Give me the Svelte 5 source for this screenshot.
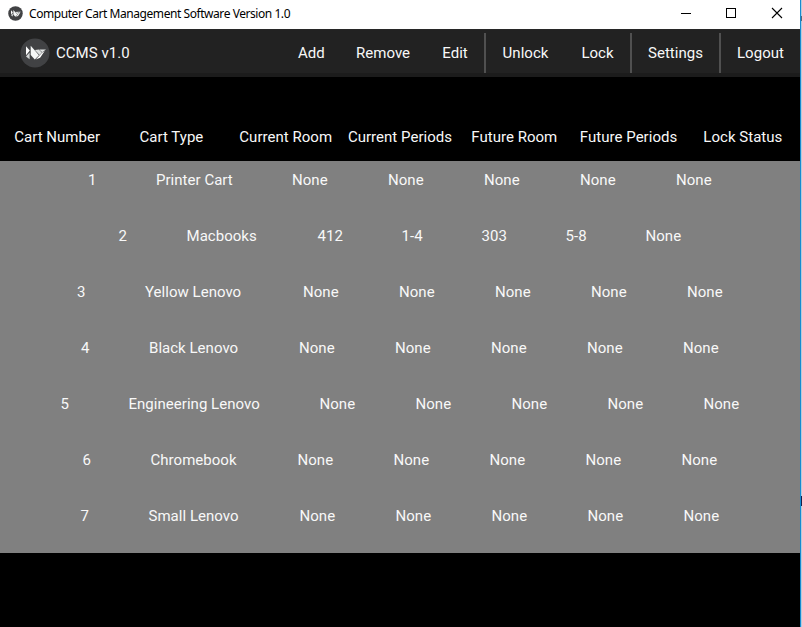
<script>
  // Each label is paired with its measured text width.
  const groups = [[['Add', 26], ['Remove', 54], ['Edit', 26]], [['Unlock', 47], ['Lock', 33]], [['Settings', 55]], [['Logout', 47]]];
  const headers = ['Cart Number', 'Cart Type', 'Current Room', 'Current Periods', 'Future Room', 'Future Periods', 'Lock Status'];
  const empty = ['None', 36];
  const carts = [
    [['1', 8], ['Printer Cart', 76], empty, empty, empty, empty, empty],
    [['2', 8], ['Macbooks', 71], ['412', 24], ['1-4', 20], ['303', 24], ['5-8', 20], empty],
    [['3', 8], ['Yellow Lenovo', 98], empty, empty, empty, empty, empty],
    [['4', 8], ['Black Lenovo', 90], empty, empty, empty, empty, empty],
    [['5', 8], ['Engineering Lenovo', 131], empty, empty, empty, empty, empty],
    [['6', 8], ['Chromebook', 87], empty, empty, empty, empty, empty],
    [['7', 8], ['Small Lenovo', 91], empty, empty, empty, empty, empty]
  ];
</script>

{#snippet logo(size)}
  <svg width={size} height={size} viewBox="0 0 30 30">
    <circle cx="15" cy="15" r="14.5" fill="#414244" />
    <path d="M6 8.3L9.8 12.6L6 17.3Z" fill="#fff" />
    <path d="M9.6 14.5V21.2L6 18.6Z" fill="#d5d8d8" />
    <path d="M10.7 7.8L19 17.2L14.8 21.5L10.7 17.1Z" fill="#f5f7f7" />
    <path d="M14.9 11.9L18.8 11.6L21.9 14.6L19.6 16.9Z" fill="#dfe2e2" />
    <path d="M19.2 11.6H26L22.2 14.2Z" fill="#e2e5e5" />
    <path d="M22 14.7L24.7 13L20.1 19.8L15.8 21.6Z" fill="#fff" />
  </svg>
{/snippet}

<div class="screen">
  <main class="window">
    <header class="titlebar">
      {@render logo(15)}
      <span class="title">Computer Cart Management Software Version 1.0</span>
      <svg class="controls" width="140" height="29" viewBox="0 0 140 29" fill="none" stroke="#000" shape-rendering="crispEdges">
        <path d="M21 13.5H31" />
        <rect x="66.5" y="8.5" width="9" height="9" />
        <path d="M112 8L122 18M122 8L112 18" shape-rendering="auto" stroke-width="1.1" />
      </svg>
    </header>
    <nav class="actions">
      {@render logo(30)}
      <span class="brand">CCMS v1.0</span>
      {#each groups as group, i}
        {#if i > 0}<span class="separator"></span>{/if}
        {#each group as [label, width]}
          <span class="action" style:width="{width}px">{label}</span>
        {/each}
      {/each}
    </nav>
    <div class="headings">
      {#each headers as heading}<span>{heading}</span>{/each}
    </div>
    <div class="list">
      {#each carts as cart}
        <div class="row">
          {#each cart as [value, width]}<span class="cell" style:width="{width}px">{value}</span>{/each}
        </div>
      {/each}
    </div>
  </main>
  <aside class="edge"><i></i><i></i></aside>
</div>

<style>
  :global(body) { margin: 0; background: #000; overflow: hidden; }
  .screen { display: flex; width: 802px; height: 627px; }
  .window {
    width: 800px; height: 627px; background: #000; color: #f8f8f8;
    font: 15px/18px Roboto, sans-serif; letter-spacing: 0.03px; white-space: nowrap;
  }
  .titlebar {
    display: flex; align-items: center; height: 29px; padding-left: 8px; box-sizing: border-box;
    background: #fff; color: #000; font: 12px/16px "Noto Sans", sans-serif; letter-spacing: -0.44px;
  }
  .titlebar > :global(svg:first-child) { margin-top: -3px; }
  .title { margin: -1px 0 0 6px; }
  .controls { margin-left: auto; }
  .actions {
    display: flex; align-items: center; height: 48px; box-sizing: border-box;
    padding-left: 20px; background: linear-gradient(#272727 0 1px, #222 1px 44px, #1c1c1c 44px);
  }
  .brand { margin: 0 auto 0 6px; }
  .action { margin: 0 16px; text-align: center; }
  .separator { width: 2px; height: 40px; background: #505050; }
  .headings { display: flex; height: 84px; box-sizing: border-box; padding-top: 51px; }
  .headings span { flex: 1 0 0; min-width: 0; text-align: center; }
  .list { height: 392px; background: #808080; }
  .row { display: flex; justify-content: center; gap: 60px; height: 56px; box-sizing: border-box; padding-top: 10px; }
  .cell { flex: none; }
  .edge { position: relative; width: 2px; background: linear-gradient(90deg, #168ad0 0 1px, #b5cbdc 1px); }
  .edge i { position: absolute; left: 1px; top: 16px; width: 1px; height: 5px; background: #586777; }
  .edge i + i { top: 496px; height: 10px; background: #17204a; }
</style>
